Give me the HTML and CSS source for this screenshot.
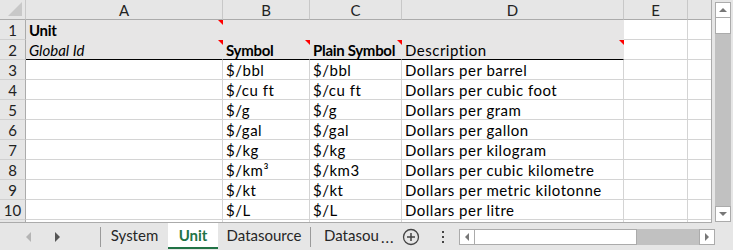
FILE: index.html
```html
<!DOCTYPE html>
<html>
<head>
    <meta charset="utf-8">
    <title>Unit - Workbook</title>
    <link rel="stylesheet" href="styles.css">
</head>
<body>
<div class="app">

    <div class="top">

        <div class="sheet">

            <div class="corner"><span class="corner-mark"></span></div>
            <div class="col-head">A</div>
            <div class="col-head">B</div>
            <div class="col-head">C</div>
            <div class="col-head">D</div>
            <div class="col-head">E</div>
            <div class="col-head last"></div>

            <div class="row-head">1</div>
            <div class="cell fill note bold">Unit</div>
            <div class="cell fill"></div>
            <div class="cell fill"></div>
            <div class="cell fill"></div>
            <div class="cell"></div>
            <div class="cell last"></div>

            <div class="row-head">2</div>
            <div class="cell fill head note italic">Global Id</div>
            <div class="cell fill head note bold">Symbol</div>
            <div class="cell fill head note bold">Plain Symbol</div>
            <div class="cell fill head note">Description</div>
            <div class="cell"></div>
            <div class="cell last"></div>

            <div class="row-head">3</div>
            <div class="cell"></div>
            <div class="cell">$/bbl</div>
            <div class="cell">$/bbl</div>
            <div class="cell">Dollars per barrel</div>
            <div class="cell"></div>
            <div class="cell last"></div>

            <div class="row-head">4</div>
            <div class="cell"></div>
            <div class="cell">$/cu ft</div>
            <div class="cell">$/cu ft</div>
            <div class="cell">Dollars per cubic foot</div>
            <div class="cell"></div>
            <div class="cell last"></div>

            <div class="row-head">5</div>
            <div class="cell"></div>
            <div class="cell">$/g</div>
            <div class="cell">$/g</div>
            <div class="cell">Dollars per gram</div>
            <div class="cell"></div>
            <div class="cell last"></div>

            <div class="row-head">6</div>
            <div class="cell"></div>
            <div class="cell">$/gal</div>
            <div class="cell">$/gal</div>
            <div class="cell">Dollars per gallon</div>
            <div class="cell"></div>
            <div class="cell last"></div>

            <div class="row-head">7</div>
            <div class="cell"></div>
            <div class="cell">$/kg</div>
            <div class="cell">$/kg</div>
            <div class="cell">Dollars per kilogram</div>
            <div class="cell"></div>
            <div class="cell last"></div>

            <div class="row-head">8</div>
            <div class="cell"></div>
            <div class="cell">$/km³</div>
            <div class="cell">$/km3</div>
            <div class="cell">Dollars per cubic kilometre</div>
            <div class="cell"></div>
            <div class="cell last"></div>

            <div class="row-head">9</div>
            <div class="cell"></div>
            <div class="cell">$/kt</div>
            <div class="cell">$/kt</div>
            <div class="cell">Dollars per metric kilotonne</div>
            <div class="cell"></div>
            <div class="cell last"></div>

            <div class="row-head">10</div>
            <div class="cell"></div>
            <div class="cell">$/L</div>
            <div class="cell">$/L</div>
            <div class="cell">Dollars per litre</div>
            <div class="cell"></div>
            <div class="cell last"></div>

            <div class="row-head stub"></div>
            <div class="cell stub"></div>
            <div class="cell stub"></div>
            <div class="cell stub"></div>
            <div class="cell stub"></div>
            <div class="cell stub"></div>
            <div class="cell stub last"></div>

        </div>

        <div class="vscroll">
            <div class="scroll-btn"><span class="arrow-up"></span></div>
            <div class="vthumb"></div>
            <div class="vtrack"></div>
            <div class="scroll-btn"><span class="arrow-down"></span></div>
        </div>

    </div>

    <div class="tabbar">

        <div class="tab-nav">
            <span class="nav-left"></span>
            <span class="nav-right"></span>
        </div>

        <div class="tab-sep"></div>

        <div class="tab tab-system">System</div>
        <div class="tab tab-active">Unit</div>
        <div class="tab tab-datasource">Datasource</div>

        <div class="tab-sep"></div>

        <div class="tab tab-cut">Datasou</div>
        <div class="tab-more">...</div>

        <div class="tab-add">
            <svg width="18" height="18" viewBox="0 0 18 18">
                <circle cx="9" cy="9" r="7.5" fill="none" stroke="#444" stroke-width="1.3"/>
                <path d="M9 5v8M5 9h8" stroke="#444" stroke-width="1.5"/>
            </svg>
        </div>

        <div class="tab-dots">
            <span></span><span></span><span></span>
        </div>

        <div class="hscroll">
            <div class="scroll-btn"><span class="arrow-left"></span></div>
            <div class="hthumb"></div>
            <div class="htrack"></div>
            <div class="scroll-btn"><span class="arrow-right"></span></div>
        </div>

    </div>

</div>
</body>
</html>
```

FILE: styles.css
```css
* {
    box-sizing: border-box;
}

body {
    margin: 0;
    font-family: Lato, "Liberation Sans", sans-serif;
    color: #000;
}

.app {
    width: 733px;
    height: 250px;
    overflow: hidden;
    background: #e6e6e6;
    display: flex;
    flex-direction: column;
}

.top {
    display: flex;
    height: 223px;
}

/* grid of the sheet */

.sheet {
    width: 712px;
    height: 223px;
    background: #fff;
    border-right: 1px solid #ababab;
    border-bottom: 1px solid #ababab;
    display: grid;
    grid-template-columns: 26px 197px 87px 92px 222px 64px 23px;
    grid-template-rows: repeat(11, 20px) 2px;
    overflow: hidden;
}

.corner {
    position: relative;
    background: #e6e6e6;
    border-right: 1px solid #c8c8c8;
    border-bottom: 1px solid #ababab;
}

.corner-mark {
    position: absolute;
    right: 3px;
    bottom: 3px;
    width: 0;
    height: 0;
    border-left: 14px solid transparent;
    border-bottom: 14px solid #c8c8c8;
}

.col-head {
    background: #e6e6e6;
    border-right: 1px solid #c8c8c8;
    border-bottom: 1px solid #ababab;
    text-align: center;
    font-size: 15px;
    line-height: 20px;
    color: #222;
}

.col-head.last {
    border-right: none;
}

.row-head {
    background: #e6e6e6;
    border-right: 1px solid #ababab;
    border-bottom: 1px solid #d0d0d0;
    text-align: center;
    font-size: 15px;
    line-height: 20px;
    color: #222;
}

.cell {
    position: relative;
    border-right: 1px solid #d4d4d4;
    border-bottom: 1px solid #d4d4d4;
    padding: 0 3px;
    font-size: 15px;
    line-height: 21px;
    letter-spacing: 0.5px;
    white-space: nowrap;
    overflow: visible;
}

.cell.last {
    border-right: none;
}

.cell.fill {
    background: #e7e6e6;
    border-right-color: #e7e6e6;
    border-bottom-color: #e7e6e6;
}

.cell.fill.head {
    border-bottom-color: #000;
}

.cell.stub,
.row-head.stub {
    border-bottom: none;
}

.bold {
    font-weight: bold;
    letter-spacing: -0.3px;
}

.italic {
    font-style: italic;
    letter-spacing: 0;
}

/* red comment marker */
.note::after {
    content: "";
    position: absolute;
    top: 0;
    right: -1px;
    width: 0;
    height: 0;
    border-left: 5px solid transparent;
    border-top: 5px solid #f00;
}

/* vertical scrollbar */

.vscroll {
    width: 16px;
    margin: 2px 0 0 3px;
    height: 220px;
    display: flex;
    flex-direction: column;
}

.scroll-btn {
    width: 16px;
    height: 16px;
    background: #fff;
    border: 1px solid #ababab;
    display: flex;
    align-items: center;
    justify-content: center;
}

.vthumb {
    height: 16px;
    background: #fff;
    border: 1px solid #ababab;
    border-top: none;
}

.vtrack {
    flex: 1;
    background: #c1c1c1;
}

.arrow-up {
    border-left: 4px solid transparent;
    border-right: 4px solid transparent;
    border-bottom: 4px solid #777;
}

.arrow-down {
    border-left: 4px solid transparent;
    border-right: 4px solid transparent;
    border-top: 4px solid #777;
}

.arrow-left {
    border-top: 4px solid transparent;
    border-bottom: 4px solid transparent;
    border-right: 4px solid #777;
}

.arrow-right {
    border-top: 4px solid transparent;
    border-bottom: 4px solid transparent;
    border-left: 4px solid #777;
}

/* sheet tabs */

.tabbar {
    height: 27px;
    display: flex;
    align-items: center;
    font-size: 15px;
    color: #262626;
}

.tab-nav {
    width: 100px;
    height: 27px;
    display: flex;
    align-items: center;
}

.nav-left {
    margin-left: 26px;
    border-top: 5px solid transparent;
    border-bottom: 5px solid transparent;
    border-right: 5px solid #b4b4b4;
}

.nav-right {
    margin-left: 24px;
    border-top: 5px solid transparent;
    border-bottom: 5px solid transparent;
    border-left: 5px solid #555;
}

.tab-sep {
    width: 1px;
    height: 20px;
    background: #9a9a9a;
}

.tab {
    height: 27px;
    line-height: 25px;
    text-align: center;
    white-space: nowrap;
}

.tab-system {
    width: 67px;
}

.tab-active {
    width: 50px;
    background: #fff;
    color: #217346;
    font-weight: bold;
    border-bottom: 2px solid #217346;
    height: 26px;
    align-self: flex-start;
}

.tab-datasource {
    width: 92px;
}

.tab-cut {
    width: 68px;
    text-align: left;
    padding-left: 13px;
}

.tab-more {
    width: 21px;
    padding-left: 2px;
    letter-spacing: 1px;
}

.tab-add {
    width: 26px;
    height: 18px;
    margin-left: 2px;
}

.tab-dots {
    width: 29px;
    height: 14px;
    display: flex;
    flex-direction: column;
    align-items: center;
    justify-content: space-between;
    padding: 1px 0;
}

.tab-dots span {
    width: 2px;
    height: 2px;
    background: #444;
}

/* horizontal scrollbar */

.hscroll {
    width: 256px;
    height: 16px;
    margin-left: 2px;
    display: flex;
}

.hthumb {
    width: 162px;
    background: #fff;
    border: 1px solid #ababab;
    border-left: none;
}

.htrack {
    flex: 1;
    background: #c1c1c1;
}
```
